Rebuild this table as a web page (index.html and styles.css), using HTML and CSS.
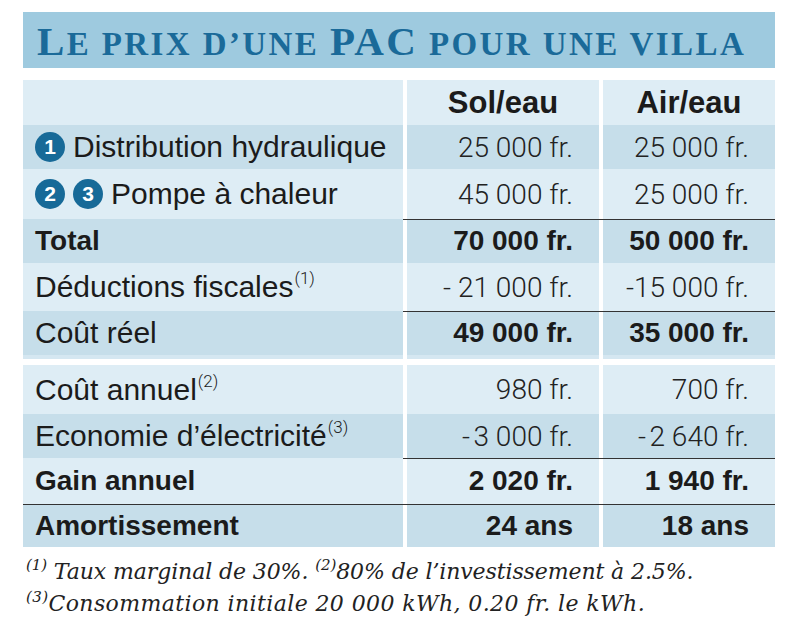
FILE: index.html
```html
<!DOCTYPE html>
<html lang="fr">
<head>
<meta charset="utf-8">
<title>Le prix d’une PAC pour une villa</title>
<link rel="stylesheet" href="styles.css">
</head>
<body>
<div class="page">
  <h1 class="title"><span class="cap">L</span>e prix d’une <span class="cap">PAC</span> pour une villa</h1>

  <div class="table">
    <div class="row light h45">
      <div class="cell label"></div>
      <div class="cell head">Sol/eau</div>
      <div class="cell head">Air/eau</div>
    </div>
    <div class="row dark h44">
      <div class="cell label"><span class="badge">1</span><span>Distribution hydraulique</span></div>
      <div class="cell num">25&nbsp;000&nbsp;fr.</div>
      <div class="cell num">25&nbsp;000&nbsp;fr.</div>
    </div>
    <div class="row light h50">
      <div class="cell label"><span class="badge">2</span><span class="badge">3</span><span>Pompe à chaleur</span></div>
      <div class="cell num">45&nbsp;000&nbsp;fr.</div>
      <div class="cell num">25&nbsp;000&nbsp;fr.</div>
    </div>
    <div class="row dark h44 ruled strong">
      <div class="cell label"><span>Total</span></div>
      <div class="cell num">70&nbsp;000&nbsp;fr.</div>
      <div class="cell num">50&nbsp;000&nbsp;fr.</div>
    </div>
    <div class="row light h48">
      <div class="cell label"><span>Déductions fiscales<sup class="fn">(1)</sup></span></div>
      <div class="cell num">-&nbsp;21&nbsp;000&nbsp;fr.</div>
      <div class="cell num">-15&nbsp;000&nbsp;fr.</div>
    </div>
    <div class="row dark h48 ruled strong strip">
      <div class="cell label"><span class="plain">Coût réel</span></div>
      <div class="cell num">49&nbsp;000&nbsp;fr.</div>
      <div class="cell num">35&nbsp;000&nbsp;fr.</div>
    </div>

    <div class="row light h49 section">
      <div class="cell label"><span>Coût annuel<sup class="fn">(2)</sup></span></div>
      <div class="cell num">980&nbsp;fr.</div>
      <div class="cell num">700&nbsp;fr.</div>
    </div>
    <div class="row dark h44">
      <div class="cell label"><span>Economie d’électricité<sup class="fn">(3)</sup></span></div>
      <div class="cell num">-&thinsp;3&nbsp;000&nbsp;fr.</div>
      <div class="cell num">-&thinsp;2&nbsp;640&nbsp;fr.</div>
    </div>
    <div class="row light h46 ruled strong">
      <div class="cell label"><span>Gain annuel</span></div>
      <div class="cell num">2&nbsp;020&nbsp;fr.</div>
      <div class="cell num">1&nbsp;940&nbsp;fr.</div>
    </div>
    <div class="row dark h43 ruled-all strong">
      <div class="cell label"><span>Amortissement</span></div>
      <div class="cell num">24&nbsp;ans</div>
      <div class="cell num">18&nbsp;ans</div>
    </div>
  </div>

  <div class="notes">
    <p><sup>(1)</sup> Taux marginal de 30%. <sup>(2)</sup>80% de l’investissement à 2.5%.</p>
    <p class="wide"><sup>(3)</sup>Consommation initiale 20&nbsp;000 kWh, 0.20 fr. le kWh.</p>
  </div>
</div>
</body>
</html>
```

FILE: styles.css
```css
* { box-sizing: border-box; }

body {
  margin: 0;
  background: #ffffff;
  font-family: "Liberation Sans", Arial, sans-serif;
  color: #1b1b1b;
}

.page {
  width: 800px;
  padding: 12px 25px 0 23px;
}

/* Title bar */
.title {
  margin: 0;
  height: 56px;
  padding: 9px 0 0 14px;
  background: #9ecadf;
  color: #1a6a99;
  font-family: "Liberation Serif", "Times New Roman", serif;
  font-weight: bold;
  font-size: 33px;
  line-height: 1;
  letter-spacing: 2.4px;
  text-transform: uppercase;
  white-space: nowrap;
}
.title .cap { font-size: 41px; }

/* Table */
.table {
  margin-top: 12px;
  width: 752px;
}

.row {
  display: grid;
  grid-template-columns: 380px 192px 172px;
  column-gap: 4px;
  background-color: #ffffff;
}
.h43 { height: 43px; }
.h44 { height: 44px; }
.h45 { height: 45px; }
.h46 { height: 46px; }
.h48 { height: 48px; }
.h49 { height: 49px; }
.h50 { height: 50px; }

.section { margin-top: 6px; }

.cell {
  display: flex;
  align-items: center;
  white-space: nowrap;
}
.light .cell { background-color: #deedf5; }
.dark .cell { background-color: #c6deea; }

.strip .cell { border-bottom: 4px solid #d5e7f1; }

/* horizontal rules */
.ruled {
  background-image: linear-gradient(#333333, #333333);
  background-repeat: no-repeat;
  background-size: 100% 1px;
  background-position: 0 0;
}
.ruled .num,
.ruled-all,
.ruled-all .cell {
  background-image: linear-gradient(#333333, #333333);
  background-repeat: no-repeat;
  background-size: 100% 1px;
  background-position: 0 0;
}

.label {
  padding-left: 12px;
  gap: 8px;
  font-size: 30px;
}
.strong .label { font-weight: bold; font-size: 28px; }
.strong .label .plain { font-weight: normal; font-size: 30px; }

.head {
  justify-content: center;
  font-weight: bold;
  font-size: 31px;
}

.num {
  justify-content: flex-end;
  padding-right: 26px;
  font-family: Roboto, "Liberation Sans", sans-serif;
  font-weight: 300;
  font-size: 28px;
  color: #222222;
}
.strong .num {
  font-family: "Liberation Sans", Arial, sans-serif;
  font-weight: bold;
  font-size: 28px;
  color: #1b1b1b;
}

.fn {
  font-family: Roboto, "Liberation Sans", sans-serif;
  font-weight: 300;
  font-size: 17px;
  line-height: 0;
  vertical-align: 0.75em;
  margin-left: 1px;
}

.badge {
  display: inline-flex;
  align-items: center;
  justify-content: center;
  width: 30px;
  height: 30px;
  border-radius: 50%;
  background: #176a98;
  color: #ffffff;
  font-weight: bold;
  font-size: 21px;
  flex: none;
}

/* Footnotes */
.notes {
  margin-top: 9px;
  font-family: "DejaVu Serif", "Liberation Serif", serif;
  font-style: italic;
  font-size: 22px;
  line-height: 32px;
  color: #222222;
  padding-left: 3px;
}
.notes p { margin: 0; white-space: nowrap; letter-spacing: -0.1px; }
.notes p.wide { letter-spacing: 0.4px; }
.notes sup {
  font-size: 15px;
  line-height: 0;
  vertical-align: 0.6em;
}
```
